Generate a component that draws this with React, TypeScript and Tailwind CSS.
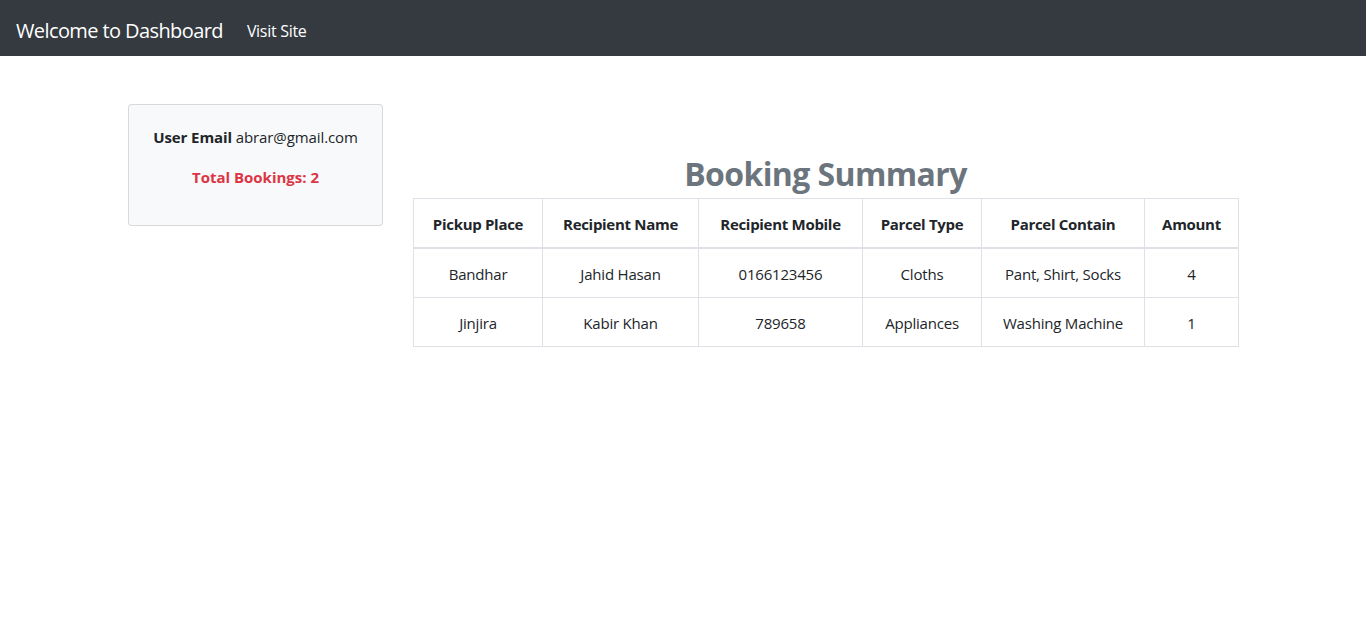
import React from "react";

const rows = [
  ["Bandhar", "Jahid Hasan", "0166123456", "Cloths", "Pant, Shirt, Socks", "4"],
  ["Jinjira", "Kabir Khan", "789658", "Appliances", "Washing Machine", "1"],
];

const headers = [
  ["Pickup Place", "w-[129px]"],
  ["Recipient Name", "w-[156px]"],
  ["Recipient Mobile", "w-[164px]"],
  ["Parcel Type", "w-[119px]"],
  ["Parcel Contain", "w-[163px]"],
  ["Amount", "w-[94px]"],
];

export default function App() {
  return (
    <div className="min-h-[643px] bg-white text-[#212529] font-['Open_Sans','Noto_Sans',sans-serif] text-[16px] leading-[1.5]">
      <nav className="h-[56px] bg-[#343a40] flex items-center px-4 pt-[5px]">
        <span className="text-[20px] text-white mr-4 tracking-[-0.6px]">Welcome to Dashboard</span>
        <a className="text-white px-2 text-[16px] tracking-[-0.3px]">Visit Site</a>
      </nav>
      <div className="w-[1140px] mx-auto px-[15px] mt-12 flex">
        <div className="w-[255px] shrink-0">
          <div className="bg-[#f8f9fa] border border-[rgba(0,0,0,0.125)] rounded p-5 text-center">
            <p className="mb-4 text-[15px] leading-[24px] tracking-[-0.1px] whitespace-nowrap">
              <span className="font-bold">User Email</span> abrar@gmail.com
            </p>
            <p className="mb-4 text-[15px] leading-[24px] font-bold text-[#dc3545]">Total Bookings: 2</p>
          </div>
        </div>
        <div className="ml-[30px] w-[825px]">
          <h2 className="mt-[51px] mb-[5px] text-center text-[32px] leading-[1.2] font-bold text-[#6c757d] tracking-[-0.6px]">
            Booking Summary
          </h2>
          <table className="w-[825px] border-collapse border border-[#dee2e6] table-fixed">
            <thead>
              <tr>
                {headers.map(([h, w]) => (
                  <th
                    key={h}
                    className={`${w} border border-[#dee2e6] border-b-2 pt-[13px] pb-[11px] px-3 text-center font-bold text-[15px] leading-[24px] whitespace-nowrap tracking-[-0.3px]`}
                  >
                    {h}
                  </th>
                ))}
              </tr>
            </thead>
            <tbody>
              {rows.map((r, i) => (
                <tr key={i}>
                  {r.map((c, j) => (
                    <td key={j} className="border border-[#dee2e6] pt-[13px] pb-[11px] px-3 text-center text-[15px] leading-[24px] whitespace-nowrap tracking-[-0.2px]">
                      {c}
                    </td>
                  ))}
                </tr>
              ))}
            </tbody>
          </table>
        </div>
      </div>
    </div>
  );
}
